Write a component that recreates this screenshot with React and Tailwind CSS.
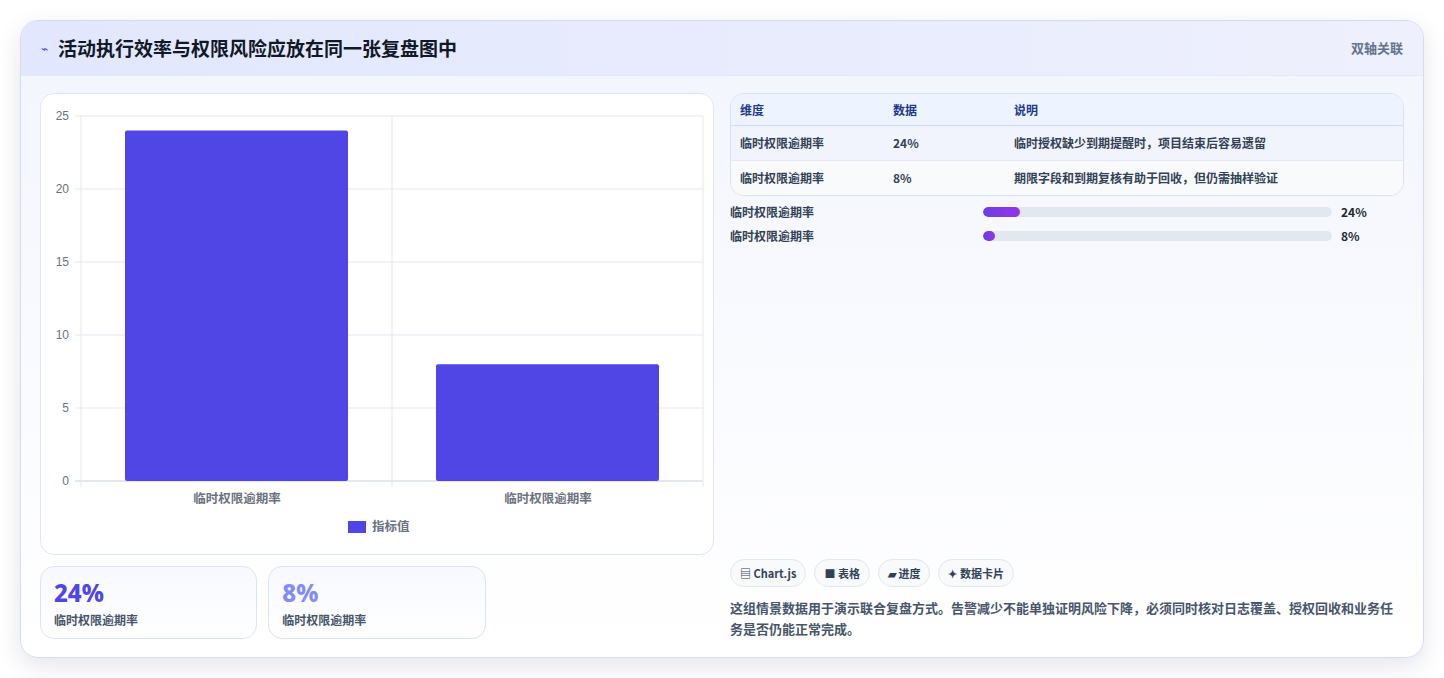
export default function App() {
  const font = { fontFamily: '"Noto Sans CJK SC", "Noto Sans", sans-serif' };
  const ticks = [25, 20, 15, 10, 5, 0];
  const y = (v) => 480 - (v / 25) * 365;
  return (
    <div className="w-[1444px] h-[678px] bg-white pt-[20px] px-[20px]" style={font}>
      <div className="w-[1404px] h-[638px] rounded-[18px] border border-[#d5dcf2] bg-gradient-to-b from-[#f3f5fe] to-white shadow-[0_8px_24px_rgba(30,41,90,0.12)] overflow-hidden flex flex-col">
        <div className="h-[55px] shrink-0 flex items-center justify-between px-[20px] bg-gradient-to-r from-[#e2e7fd] to-[#eef0fd] border-b border-[#e3e7f6]">
          <div className="flex items-center gap-[10px]">
            <span className="text-[#4f46e5] text-[12px]">⌁</span>
            <span className="text-[19px] font-bold text-[#111827]">活动执行效率与权限风险应放在同一张复盘图中</span>
          </div>
          <span className="text-[13px] font-semibold text-[#64748b]">双轴关联</span>
        </div>
        <div className="flex-1 grid grid-cols-2 gap-[16px] px-[19px] pt-[17px] pb-[19px]">
          <div className="flex flex-col gap-[11px]">
            <div className="h-[462px] rounded-[14px] border border-[#dfe5f2] bg-white">
              <svg width="674" height="462" viewBox="40 93 674 462">
                {ticks.map((t) => (
                  <g key={t}>
                    <line x1="74" x2="702" y1={y(t)} y2={y(t)} stroke={t === 0 ? "#cbd2de" : "#e3e7ee"} />
                    <text x="68" y={y(t) + 4} textAnchor="end" fontSize="12" fill="#6b7280" fontFamily="Liberation Sans, sans-serif">{t}</text>
                  </g>
                ))}
                <line x1="80" x2="80" y1="115" y2="486" stroke="#e3e7ee" />
                <line x1="391" x2="391" y1="115" y2="486" stroke="#e3e7ee" />
                <line x1="702" x2="702" y1="115" y2="486" stroke="#e3e7ee" />
                <rect x="124" y={y(24)} width="223" height={480 - y(24)} rx="2" fill="#4f46e5" />
                <rect x="435" y={y(8)} width="223" height={480 - y(8)} rx="2" fill="#4f46e5" />
                <text x="236" y="502" textAnchor="middle" fontSize="12.5" fill="#6b7280" fontWeight="600">临时权限逾期率</text>
                <text x="547" y="502" textAnchor="middle" fontSize="12.5" fill="#6b7280" fontWeight="600">临时权限逾期率</text>
                <rect x="347" y="520" width="18" height="12" fill="#4f46e5" />
                <text x="371" y="530" fontSize="12.5" fill="#6b7280" fontWeight="600">指标值</text>
              </svg>
            </div>
            <div className="grid grid-cols-3 gap-[11px]">
              {[["24%", "text-[#4f46e5]"], ["8%", "text-[#818cf8]"]].map(([v, c], i) => (
                <div key={i} className="h-[73px] rounded-[14px] border border-[#dbe4f5] bg-gradient-to-b from-[#f7f9ff] to-white px-[13px] pt-[10px]">
                  <div className={`text-[24px] leading-[32px] font-extrabold ${c}`} style={{ fontFamily: '"Noto Sans", sans-serif' }}>{v}</div>
                  <div className="text-[12px] text-[#475569] font-semibold mt-[2px]">临时权限逾期率</div>
                </div>
              ))}
            </div>
          </div>
          <div className="flex flex-col">
            <div className="rounded-[14px] border border-[#d9e0ee] overflow-hidden text-[12px] font-semibold">
              <div className="h-[32px] flex items-center bg-[#eef4ff] border-b border-[#d5dcea] text-[#1e3a8a]">
                <div className="w-[162px] pl-[9px]">维度</div><div className="w-[121px]">数据</div><div>说明</div>
              </div>
              <div className="h-[35px] flex items-center bg-[#f1f4fd] border-b border-[#e5e9f2] text-[#334155]">
                <div className="w-[162px] pl-[9px]">临时权限逾期率</div><div className="w-[121px]">24%</div><div>临时授权缺少到期提醒时，项目结束后容易遗留</div>
              </div>
              <div className="h-[34px] flex items-center bg-[#f8fafc] text-[#334155]">
                <div className="w-[162px] pl-[9px]">临时权限逾期率</div><div className="w-[121px]">8%</div><div>期限字段和到期复核有助于回收，但仍需抽样验证</div>
              </div>
            </div>
            <div className="mt-[8px] flex flex-col gap-[8px] text-[12px] font-semibold text-[#334155]">
              {[["24%", 37], ["8%", 12]].map(([v, w], i) => (
                <div key={i} className="h-[16px] flex items-center">
                  <div className="w-[253px]">临时权限逾期率</div>
                  <div className="w-[349px] h-[10px] rounded-full bg-[#e2e8f0] overflow-hidden">
                    <div className="h-full rounded-full bg-gradient-to-r from-[#6d3ee0] to-[#9333ea]" style={{ width: w }} />
                  </div>
                  <div className="ml-[9px] font-bold text-[#1f2937]">{v}</div>
                </div>
              ))}
            </div>
            <div className="flex-1" />
            <div className="flex gap-[8px] text-[11px] font-bold text-[#334155]">
              {["▤ Chart.js", "■ 表格", "▰ 进度", "✦ 数据卡片"].map((t) => (
                <div key={t} className="h-[28px] px-[9px] flex items-center rounded-full border border-[#e2e8f0] bg-[#f8fafc]">{t}</div>
              ))}
            </div>
            <p className="mt-[10px] text-[13px] leading-[21px] font-semibold text-[#475569]">这组情景数据用于演示联合复盘方式。告警减少不能单独证明风险下降，必须同时核对日志覆盖、授权回收和业务任务是否仍能正常完成。</p>
          </div>
        </div>
      </div>
    </div>
  );
}
